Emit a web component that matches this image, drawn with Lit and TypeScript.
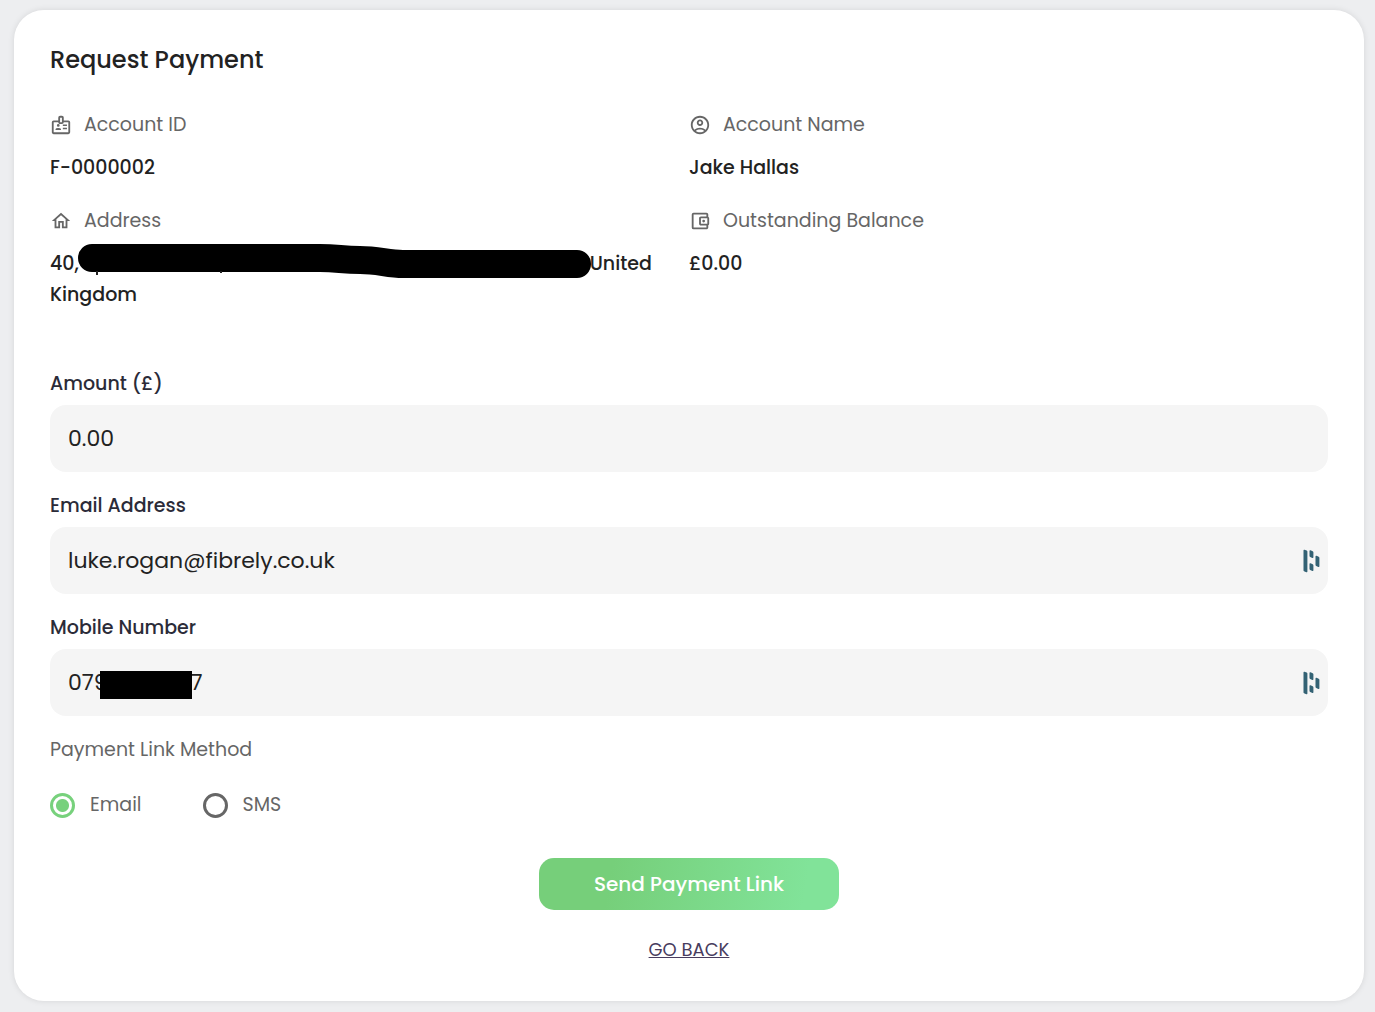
import { LitElement, html, css, svg } from "lit";
import { customElement } from "lit/decorators.js";

const badgeIcon = svg`<path d="M14 11.500h4.500v1.500H14zM14 15h4.500v1.500H14zM9 14a1.500 1.500 0 1 0 0-3 1.500 1.500 0 0 0 0 3zM6 17.500v-.600c0-.600.400-1.100.900-1.300a5.400 5.400 0 0 1 4.200 0c.500.200.900.700.900 1.300v.600zM20 7h-5V4c0-1.100-.900-2-2-2h-2a2 2 0 0 0-2 2v3H4a2 2 0 0 0-2 2v11c0 1.100.900 2 2 2h16a2 2 0 0 0 2-2V9a2 2 0 0 0-2-2zm-9-3h2v5h-2V4zm9 16H4V9h5c0 1.100.900 2 2 2h2a2 2 0 0 0 2-2h5v11z"/>`;
const personIcon = svg`<path d="M12 2C6.480 2 2 6.480 2 12s4.480 10 10 10 10-4.480 10-10S17.520 2 12 2zM7.350 18.500C8.660 17.560 10.260 17 12 17s3.340.560 4.650 1.500C15.340 19.440 13.740 20 12 20s-3.340-.560-4.650-1.500zm10.790-1.380C16.450 15.800 14.320 15 12 15s-4.450.800-6.140 2.120C4.700 15.730 4 13.950 4 12c0-4.420 3.580-8 8-8s8 3.580 8 8c0 1.950-.700 3.730-1.860 5.120zM12 6c-1.930 0-3.500 1.570-3.500 3.500S10.070 13 12 13s3.500-1.570 3.500-3.500S13.930 6 12 6zm0 5c-.830 0-1.500-.670-1.500-1.500S11.170 8 12 8s1.500.670 1.500 1.500S12.830 11 12 11z"/>`;
const homeIcon = svg`<path d="m12 5.690 5 4.500V18h-2v-6H9v6H7v-7.810l5-4.500M12 3 2 12h3v8h6v-6h2v6h6v-8h3L12 3z"/>`;
const walletIcon = svg`<path d="M21 7.280V5c0-1.100-.900-2-2-2H5a2 2 0 0 0-2 2v14a2 2 0 0 0 2 2h14c1.100 0 2-.900 2-2v-2.280c.590-.350 1-.980 1-1.720V9c0-.740-.410-1.370-1-1.720zM20 9v6h-7V9h7zM5 19V5h14v2h-6c-1.100 0-2 .900-2 2v6c0 1.100.900 2 2 2h6v2H5z"/><circle cx="16" cy="12" r="1.500"/>`;

@customElement("app-root")
export class AppRoot extends LitElement {
  static styles = css`
    :host {
      display: block;
      min-height: 100vh;
      box-sizing: border-box;
      padding: 10px 11px 11px 14px;
      background: #edeef0;
      font-family: Poppins, Inter, "Noto Sans", sans-serif;
      font-size: 19px;
      line-height: 30px;
      color: #666;
    }
    * { box-sizing: border-box; }
    .card {
      background: #fff;
      border-radius: 30px;
      padding: 32px 36px 37px;
      box-shadow: 0 0 6px rgba(0, 0, 0, 0.1);
    }
    h1 {
      margin: 0 0 32px;
      font-size: 24px;
      line-height: 36px;
      font-weight: 500;
      color: #222;
    }
    .details {
      margin: 0 0 59px;
      display: grid;
      grid-template-columns: 1fr 1fr;
      row-gap: 23px;
    }
    dt { display: flex; align-items: center; gap: 12px; }
    dd { margin: 12px 0 0; line-height: 31px; font-weight: 500; color: #222; }
    .icon { width: 22px; height: 22px; fill: #666; }
    .hidden-text { position: relative; display: inline-block; width: 511px; height: 20px; vertical-align: middle; }
    .scribble { position: absolute; left: -1px; top: -12px; width: 513px; height: 36px; }
    .field { margin-bottom: 19px; }
    .field label { display: block; margin-bottom: 6px; font-weight: 500; color: #2b2b38; }
    .box { position: relative; display: flex; align-items: center; }
    .box input {
      width: 100%;
      height: 67px;
      border: 0;
      border-radius: 16px;
      padding: 0 18px;
      background: #f5f5f5;
      color: #222;
      font: inherit;
      font-size: 22px;
    }
    .mark { position: absolute; right: 8px; width: 17px; height: 24px; fill: #336274; }
    .mask { position: absolute; left: 50px; top: 22px; width: 92px; height: 28px; background: #000; }
    fieldset { margin: 0 0 38px; border: 0; padding: 0; }
    legend { padding: 0; margin-bottom: 25px; }
    .options { display: flex; gap: 61px; }
    .option { display: flex; align-items: center; gap: 15px; }
    .option input {
      appearance: none;
      margin: 0;
      width: 25px;
      height: 25px;
      border: 3px solid #666;
      border-radius: 50%;
    }
    .option input:checked {
      border-color: #77d17c;
      background: radial-gradient(circle, #77d17c 6px, transparent 7px);
    }
    .actions { display: flex; flex-direction: column; align-items: center; gap: 26px; }
    button {
      width: 300px;
      height: 52px;
      border: 0;
      border-radius: 15px;
      background: linear-gradient(100deg, #76cf7a 24%, #81e399 88%);
      color: #fff;
      font: inherit;
      font-size: 20px;
      font-weight: 500;
    }
    a { color: #483c5e; font-size: 18px; line-height: 28px; }
  `;

  private icon(shape: unknown) {
    return html`<svg class="icon" viewBox="0 0 24 24" aria-hidden="true">${shape}</svg>`;
  }

  private mark() {
    return html`<svg class="mark" viewBox="0 0 17 24" aria-hidden="true">
      <path d="M.500 1.500Q.500.500 1.500.800l2.200.800q.700.300.700 1v20q0 .800-1 .600L1.500 22.600q-1-.300-1-1zM6.500 2q0-1 1-.700l2.200.900q.700.300.700 1v5q0 1-1 .700l-2.200-.900q-.700-.300-.700-1zM12.500 7.500q0-1 1-.700l2.200.900q.700.300.700 1v8.500q0 1-1 .700l-2.200-.900q-.700-.300-.700-1zM6.500 15q0-1 1-.700l2.200.900q.700.300.700 1v5q0 1-1 .700l-2.200-.900q-.700-.300-.700-1z"/>
    </svg>`;
  }

  render() {
    return html`
      <main class="card">
        <h1>Request Payment</h1>
        <dl class="details">
          <div><dt>${this.icon(badgeIcon)}Account ID</dt><dd>F-0000002</dd></div>
          <div><dt>${this.icon(personIcon)}Account Name</dt><dd>Jake Hallas</dd></div>
          <div>
            <dt>${this.icon(homeIcon)}Address</dt>
            <dd>40,<span class="hidden-text"><svg class="scribble" viewBox="0 0 513 36" aria-hidden="true">
              <path d="M14 15H242C260 15 264 17 282 17C300 17 310 21 325 21H499" fill="none" stroke="#000" stroke-width="28" stroke-linecap="round"/>
              <path d="M18 28h2v4h-2zM142 28h2v2h-2z" fill="#222"/>
            </svg></span>United Kingdom</dd>
          </div>
          <div><dt>${this.icon(walletIcon)}Outstanding Balance</dt><dd>£0.00</dd></div>
        </dl>
        <form @submit=${(e: Event) => e.preventDefault()}>
          <div class="field">
            <label for="amount">Amount (£)</label>
            <div class="box"><input id="amount" type="text" inputmode="decimal" value="0.00"></div>
          </div>
          <div class="field">
            <label for="email">Email Address</label>
            <div class="box"><input id="email" type="email" value="luke.rogan@fibrely.co.uk">${this.mark()}</div>
          </div>
          <div class="field">
            <label for="mobile">Mobile Number</label>
            <div class="box"><input id="mobile" type="tel" value="079&#x2007;&#x2007;&#x2007;&#x2007;&#x2007;&#x2007;7"><span class="mask"></span>${this.mark()}</div>
          </div>
          <fieldset>
            <legend>Payment Link Method</legend>
            <div class="options">
              <label class="option"><input type="radio" name="method" value="email" checked>Email</label>
              <label class="option"><input type="radio" name="method" value="sms">SMS</label>
            </div>
          </fieldset>
          <div class="actions">
            <button type="submit">Send Payment Link</button>
            <a href="#">GO BACK</a>
          </div>
        </form>
      </main>
    `;
  }
}
